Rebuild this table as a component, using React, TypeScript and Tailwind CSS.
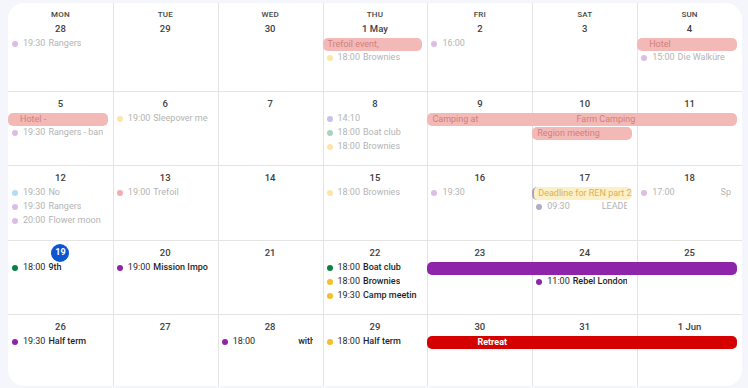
import type { CSSProperties, ReactNode } from 'react';

type Ev =
  | { kind: 'dot'; col: number; row: number; dot: string; time: string; title?: string; gap?: number }
  | { kind: 'bar'; col: number; row: number; span?: number; className: string; children?: ReactNode };

type Week = {
  dates: string[];
  height: string;
  past: boolean;
  events: Ev[];
};

const DAYS = ['MON', 'TUE', 'WED', 'THU', 'FRI', 'SAT', 'SUN'];

const pinkBar = 'bg-[#f3b9b7] text-[#d27f7b]';

const WEEKS: Week[] = [
  {
    dates: ['28', '29', '30', '1 May', '2', '3', '4'],
    height: 'h-[89px]',
    past: true,
    events: [
      { kind: 'dot', col: 1, row: 0, dot: 'bg-[#dcbde3]', time: '19:30', title: 'Rangers' },
      { kind: 'bar', col: 4, row: 0, className: `${pinkBar} pl-[5px]`, children: 'Trefoil event,' },
      { kind: 'dot', col: 4, row: 1, dot: 'bg-[#fce5a6]', time: '18:00', title: 'Brownies' },
      { kind: 'dot', col: 5, row: 0, dot: 'bg-[#dcbde3]', time: '16:00' },
      { kind: 'bar', col: 7, row: 0, className: `${pinkBar} pl-[12px]`, children: 'Hotel' },
      { kind: 'dot', col: 7, row: 1, dot: 'bg-[#dcbde3]', time: '15:00', title: 'Die Walküre' },
    ],
  },
  {
    dates: ['5', '6', '7', '8', '9', '10', '11'],
    height: 'h-[74px]',
    past: true,
    events: [
      { kind: 'bar', col: 1, row: 0, className: `${pinkBar} pl-[12px]`, children: 'Hotel -' },
      { kind: 'dot', col: 1, row: 1, dot: 'bg-[#dcbde3]', time: '19:30', title: 'Rangers - banquet' },
      { kind: 'dot', col: 2, row: 0, dot: 'bg-[#fce5a6]', time: '19:00', title: 'Sleepover meeting' },
      { kind: 'dot', col: 4, row: 0, dot: 'bg-[#c4c3ea]', time: '14:10' },
      { kind: 'dot', col: 4, row: 1, dot: 'bg-[#a9d3bd]', time: '18:00', title: 'Boat club' },
      { kind: 'dot', col: 4, row: 2, dot: 'bg-[#fce5a6]', time: '18:00', title: 'Brownies' },
      {
        kind: 'bar',
        col: 5,
        row: 0,
        span: 3,
        className: `${pinkBar} pl-[5px]`,
        children: (
          <>
            <span className="w-[144px] shrink-0">Camping at</span>
            <span>Farm Camping</span>
          </>
        ),
      },
      { kind: 'bar', col: 6, row: 1, className: `${pinkBar} pl-[5px]`, children: 'Region meeting' },
    ],
  },
  {
    dates: ['12', '13', '14', '15', '16', '17', '18'],
    height: 'h-[75px]',
    past: true,
    events: [
      { kind: 'dot', col: 1, row: 0, dot: 'bg-[#b3dcef]', time: '19:30', title: 'No' },
      { kind: 'dot', col: 1, row: 1, dot: 'bg-[#dcbde3]', time: '19:30', title: 'Rangers' },
      { kind: 'dot', col: 1, row: 2, dot: 'bg-[#dcbde3]', time: '20:00', title: 'Flower moon' },
      { kind: 'dot', col: 2, row: 0, dot: 'bg-[#f2aeae]', time: '19:00', title: 'Trefoil' },
      { kind: 'dot', col: 4, row: 0, dot: 'bg-[#fce5a6]', time: '18:00', title: 'Brownies' },
      { kind: 'dot', col: 5, row: 0, dot: 'bg-[#dcbde3]', time: '19:30' },
      {
        kind: 'bar',
        col: 6,
        row: 0,
        className: 'bg-[#fdefc6] text-[#d6b25c] border-l-2 border-[#aaa0c2] pl-[4px]',
        children: 'Deadline for REN part 2 submission',
      },
      { kind: 'dot', col: 6, row: 1, dot: 'bg-[#b2adc4]', time: '09:30', title: 'LEADE', gap: 32 },
      { kind: 'dot', col: 7, row: 0, dot: 'bg-[#dcbde3]', time: '17:00', title: 'Sp', gap: 46 },
    ],
  },
  {
    dates: ['19', '20', '21', '22', '23', '24', '25'],
    height: 'h-[74px]',
    past: false,
    events: [
      { kind: 'dot', col: 1, row: 0, dot: 'bg-[#0b8043]', time: '18:00', title: '9th' },
      { kind: 'dot', col: 2, row: 0, dot: 'bg-[#8e24aa]', time: '19:00', title: 'Mission Impossible' },
      { kind: 'dot', col: 4, row: 0, dot: 'bg-[#0b8043]', time: '18:00', title: 'Boat club' },
      { kind: 'dot', col: 4, row: 1, dot: 'bg-[#f6bf26]', time: '18:00', title: 'Brownies' },
      { kind: 'dot', col: 4, row: 2, dot: 'bg-[#f6bf26]', time: '19:30', title: 'Camp meeting' },
      { kind: 'bar', col: 5, row: 0, span: 3, className: 'bg-[#8e24aa]' },
      { kind: 'dot', col: 6, row: 1, dot: 'bg-[#8e24aa]', time: '11:00', title: 'Rebel London' },
    ],
  },
  {
    dates: ['26', '27', '28', '29', '30', '31', '1 Jun'],
    height: 'flex-1',
    past: false,
    events: [
      { kind: 'dot', col: 1, row: 0, dot: 'bg-[#8e24aa]', time: '19:30', title: 'Half term' },
      { kind: 'dot', col: 3, row: 0, dot: 'bg-[#8e24aa]', time: '18:00', title: 'with', gap: 43 },
      { kind: 'dot', col: 4, row: 0, dot: 'bg-[#f6bf26]', time: '18:00', title: 'Half term' },
      {
        kind: 'bar',
        col: 5,
        row: 0,
        span: 3,
        className: 'bg-[#d50000] text-white font-bold pl-[50px]',
        children: 'Retreat',
      },
    ],
  },
];

function WeekRow({ week, first }: { week: Week; first: boolean }) {
  // first week carries the weekday labels above the dates
  const eventRowStart = first ? 4 : 3;
  const dateRow = first ? 3 : 2;

  return (
    <div
      className={`${week.height} grid grid-cols-7 ${
        first
          ? 'grid-rows-[6px_12px_16px_repeat(4,14px)_1fr]'
          : 'grid-rows-[4px_16px_repeat(4,14px)_1fr]'
      } ${week.height === 'flex-1' ? '' : 'border-b border-[#e4e4e4]'}`}
    >
      {/* Day columns */}
      {week.dates.map((_, i) => (
        <div
          key={`c${i}`}
          className={`row-span-full ${i > 0 ? 'border-l border-[#e4e4e4]' : ''}`}
          style={{ gridColumn: i + 1 }}
        />
      ))}

      {first &&
        DAYS.map((d, i) => (
          <div
            key={d}
            className="row-start-2 flex items-center justify-center text-[8px] font-medium text-[#444746] tracking-[0.2px]"
            style={{ gridColumn: i + 1 }}
          >
            {d}
          </div>
        ))}

      {week.dates.map((d, i) => (
        <div
          key={`d${i}`}
          className="flex items-center justify-center"
          style={{ gridColumn: i + 1, gridRow: dateRow }}
        >
          {d === '19' && !week.past ? (
            <span className="w-[18px] h-[18px] rounded-full bg-[#0b57d0] text-white text-[9px] font-bold flex items-center justify-center">
              19
            </span>
          ) : (
            <span className="text-[9.5px] font-medium text-[#3c4043]">{d}</span>
          )}
        </div>
      ))}

      {week.events.map((ev, i) => {
        const place: CSSProperties = {
          gridColumn: `${ev.col} / span ${ev.kind === 'bar' ? ev.span ?? 1 : 1}`,
          gridRow: eventRowStart + ev.row,
        };
        if (ev.kind === 'bar') {
          return (
            <div
              key={i}
              className={`self-center h-[13px] mr-[5px] rounded-[5px] flex items-center overflow-hidden whitespace-nowrap text-[9px] leading-none ${ev.className}`}
              style={place}
            >
              {ev.children}
            </div>
          );
        }
        return (
          <div
            key={i}
            className={`flex items-center min-w-0 pl-[4px] pr-[10px] overflow-hidden whitespace-nowrap text-[9px] ${
              week.past ? 'text-[#b3b3b3]' : 'text-[#1f1f1f]'
            }`}
            style={place}
          >
            <span className={`w-[6px] h-[6px] rounded-full shrink-0 mr-[5px] ${ev.dot}`} />
            <span className="shrink-0">{ev.time}</span>
            {ev.title && (
              <span
                className={`overflow-hidden ${week.past ? '' : 'font-medium'}`}
                style={{ marginLeft: ev.gap ?? 3 }}
              >
                {ev.title}
              </span>
            )}
          </div>
        );
      })}
    </div>
  );
}

export default function App() {
  return (
    <div className="w-[748px] h-[388px] bg-[#f4f6fb] pl-[8px] pr-[6px] pt-[3px] pb-[2px] overflow-hidden font-['Roboto',sans-serif]">
      <div className="bg-white rounded-[16px] h-full overflow-hidden flex flex-col">
        {WEEKS.map((w, i) => (
          <WeekRow key={i} week={w} first={i === 0} />
        ))}
      </div>
    </div>
  );
}
